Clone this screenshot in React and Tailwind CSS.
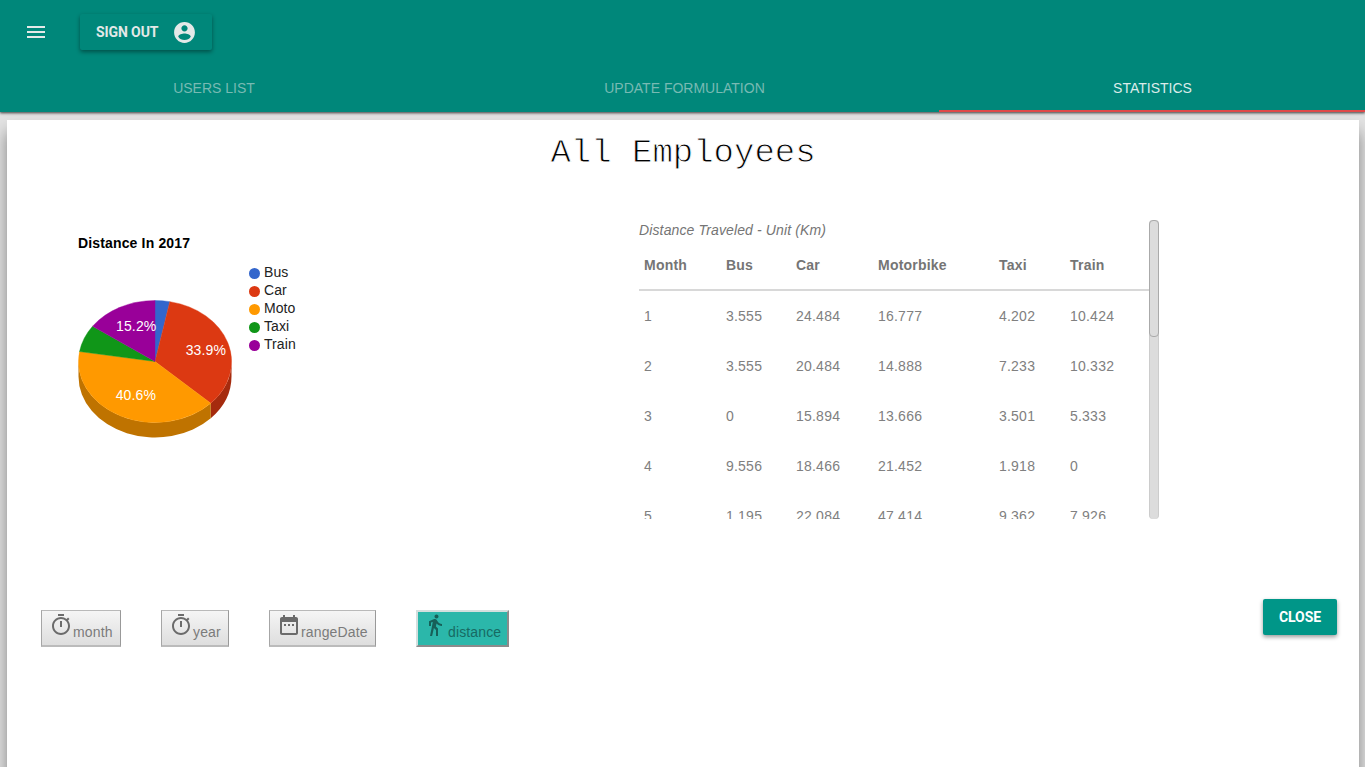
import React from 'react';

const tabs = ['USERS LIST', 'UPDATE FORMULATION', 'STATISTICS'];

const columns = ['Month', 'Bus', 'Car', 'Motorbike', 'Taxi', 'Train'];

const rows = [
  ['1', '3.555', '24.484', '16.777', '4.202', '10.424'],
  ['2', '3.555', '20.484', '14.888', '7.233', '10.332'],
  ['3', '0', '15.894', '13.666', '3.501', '5.333'],
  ['4', '9.556', '18.466', '21.452', '1.918', '0'],
  ['5', '1.195', '22.084', '47.414', '9.362', '7.926'],
];

const slices = [
  { name: 'Bus', value: 3.1, color: '#3366cc' },
  { name: 'Car', value: 33.9, color: '#dc3912' },
  { name: 'Moto', value: 40.6, color: '#ff9900' },
  { name: 'Taxi', value: 7.2, color: '#109618' },
  { name: 'Train', value: 15.2, color: '#990099' },
];

const CX = 77;
const CY = 61.5;
const RX = 76.5;
const RY = 61;
const DEPTH = 15;

function rim(percent) {
  const a = (percent / 100) * 2 * Math.PI;
  return [CX + RX * Math.sin(a), CY - RY * Math.cos(a)];
}

function wall(from, to) {
  const [x1, y1] = rim(from);
  const [x2, y2] = rim(to);
  return `M${x1} ${y1}A${RX} ${RY} 0 0 1 ${x2} ${y2}V${y2 + DEPTH}A${RX} ${RY} 0 0 0 ${x1} ${y1 + DEPTH}Z`;
}

function Pie() {
  let start = 0;
  return (
    <svg width="154" height="140" viewBox="0 0 154 140" className="block shrink-0">
      <path d={wall(25, 37)} fill="#a52b0e" />
      <path d={wall(37, 75)} fill="#bf7300" />
      {slices.map((s) => {
        const [x1, y1] = rim(start);
        start += s.value;
        const [x2, y2] = rim(start);
        return (
          <path
            key={s.name}
            d={`M${CX} ${CY}L${x1} ${y1}A${RX} ${RY} 0 0 1 ${x2} ${y2}Z`}
            fill={s.color}
            stroke={s.color}
            strokeWidth="0.4"
          />
        );
      })}
      <g fill="#fff" fontSize="14" letterSpacing="0.14" fontFamily="Liberation Sans, Arial, sans-serif">
        <text x="38" y="31">15.2%</text>
        <text x="107.7" y="55">33.9%</text>
        <text x="37.7" y="100">40.6%</text>
      </g>
    </svg>
  );
}

function Icon({ d, size, className }) {
  return (
    <svg width={size} height={size} viewBox="0 0 24 24" fill="currentColor" className={className}>
      <path d={d} />
    </svg>
  );
}

const MENU = 'M3 18h18v-2H3v2zm0-5h18v-2H3v2zm0-7v2h18V6H3z';
const ACCOUNT =
  'M12 2C6.48 2 2 6.48 2 12s4.48 10 10 10 10-4.48 10-10S17.52 2 12 2zm0 3c1.66 0 3 1.34 3 3s-1.34 3-3 3-3-1.34-3-3 1.34-3 3-3zm0 14.2c-2.5 0-4.71-1.28-6-3.22.03-1.99 4-3.08 6-3.08 1.99 0 5.97 1.09 6 3.08-1.29 1.94-3.5 3.22-6 3.22z';
const TIMER =
  'M15 1H9v2h6V1zm-4 13h2V8h-2v6zm8.03-6.61l1.42-1.42c-.43-.51-.9-.99-1.41-1.41l-1.42 1.42C16.07 4.74 14.12 4 12 4c-4.97 0-9 4.03-9 9s4.02 9 9 9 9-4.03 9-9c0-2.12-.74-4.07-1.97-5.61zM12 20c-3.87 0-7-3.13-7-7s3.13-7 7-7 7 3.13 7 7-3.13 7-7 7z';
const DATE =
  'M9 11H7v2h2v-2zm4 0h-2v2h2v-2zm4 0h-2v2h2v-2zm2-7h-1V2h-2v2H8V2H6v2H5c-1.11 0-1.99.9-1.99 2L3 20c0 1.1.89 2 2 2h14c1.1 0 2-.9 2-2V6c0-1.1-.9-2-2-2zm0 16H5V9h14v11z';
const WALK =
  'M13.5 5.5c1.1 0 2-.9 2-2s-.9-2-2-2-2 .9-2 2 .9 2 2 2zM9.8 8.9L7 23h2.1l1.8-8 2.1 2v6h2v-7.5l-2.1-2 .6-3C14.8 12 16.8 13 19 13v-2c-1.9 0-3.5-1-4.3-2.4l-1-1.6c-.4-.6-1-1-1.7-1-.3 0-.5.1-.8.1L6 8.3V13h2V9.6l1.8-.7';

const filters = [
  { label: 'month', icon: TIMER, width: 'w-[80px]' },
  { label: 'year', icon: TIMER, width: 'w-[68px]' },
  { label: 'rangeDate', icon: DATE, width: 'w-[107px]' },
  { label: 'distance', icon: WALK, width: 'w-[93px]', active: true },
];

function FilterButton({ label, icon, width, active }) {
  const look = active
    ? 'border-2 pl-[5px] border-t-[#d4dfde] border-l-[#d4dfde] border-r-[#8b8b8b] border-b-[#8b8b8b] bg-[#2bb7aa] text-[#176a63]'
    : 'border pl-[7px] pt-px border-t-[#b9b9b9] border-l-[#a6a6a6] border-r-[#999] border-b-2 border-b-[#bbb] bg-linear-to-b from-[#f5f5f5] to-[#dedede] text-[#7b7b7b]';
  return (
    <button className={`flex h-[37px] items-start whitespace-nowrap ${width} ${look}`}>
      <Icon
        d={icon}
        size={24}
        className={active ? 'mt-px mr-px shrink-0 text-[#176058]' : 'mt-px shrink-0 text-[#6b6b6b]'}
      />
      <span className="mt-[10px] text-[14px] leading-5 tracking-[0.14px]">{label}</span>
    </button>
  );
}

export default function App() {
  return (
    <div className="flex h-[767px] w-[1365px] flex-col overflow-hidden bg-[#e2e2e2] font-['Liberation_Sans',Arial,sans-serif]">
      <header className="relative z-10 flex h-28 shrink-0 flex-col bg-[#00877a] shadow-[0_1px_3px_rgba(0,0,0,0.5),0_1px_2px_rgba(0,0,0,0.35)]">
        <div className="flex h-16 items-center pl-6 text-[#e4e9e8]">
          <Icon d={MENU} size={24} />
          <button className="ml-8 flex h-9 w-[132px] items-center rounded-[2px] pl-4 shadow-[0_2px_4px_rgba(0,0,0,0.4)]">
            <span className="w-[76px] text-left font-[Roboto,sans-serif] text-[14px] leading-[35px] font-bold tracking-[-0.1px]">
              SIGN OUT
            </span>
            <Icon d={ACCOUNT} size={25} className="shrink-0" />
          </button>
        </div>
        <nav className="grid h-12 grid-cols-[428px_513px_424px]">
          {tabs.map((tab, i) => (
            <div
              key={tab}
              className={
                i === 2
                  ? '-ml-0.5 h-12 border-b-2 border-[#e04848] pl-px text-center text-[14px] leading-12 text-[#dcecea]'
                  : 'h-12 text-center text-[14px] leading-12 text-[#78bab3]'
              }
            >
              {tab}
            </div>
          ))}
        </nav>
      </header>

      <main className="mx-[7px] mt-2 mr-[6px] flex h-[700px] shrink-0 flex-col bg-white shadow-[0_12px_15px_rgba(0,0,0,0.42)]">
        <h1 className="h-[100px] pt-[13px] text-center font-['Liberation_Mono','Courier_New',monospace] text-[34px] leading-10 font-normal text-black [-webkit-text-stroke:0.9px_white]">
          All Employees
        </h1>

        <div className="flex h-[300px]">
          <section className="w-[632px] pt-[15px] pl-[71px]">
            <h2 className="text-[14px] leading-4 font-bold tracking-[0.15px] text-black">Distance In 2017</h2>
            <div className="flex">
              <div className="pt-[49px]">
                <Pie />
              </div>
              <ul className="ml-[17px] pt-[12px] text-[14px] tracking-[0.08px] text-[#222]">
                {slices.map((s) => (
                  <li key={s.name} className="flex h-[18px] items-center gap-1 leading-[18px]">
                    <span className="mt-[2px] size-[11px] rounded-full" style={{ background: s.color }} />
                    {s.name}
                  </li>
                ))}
              </ul>
            </div>
          </section>

          <section className="flex h-[299px] w-[520px] overflow-hidden">
            <div className="h-[299px] w-[510px] overflow-hidden text-[14px] tracking-[0.22px] text-[#757575]">
              <p className="h-5 leading-5 tracking-[0.13px] italic">Distance Traveled - Unit (Km)</p>
              <table className="w-[510px] table-fixed border-separate border-spacing-0">
                <colgroup>
                  <col className="w-[82px]" />
                  <col className="w-[70px]" />
                  <col className="w-[82px]" />
                  <col className="w-[121px]" />
                  <col className="w-[71px]" />
                  <col className="w-[84px]" />
                </colgroup>
                <thead>
                  <tr className="h-[51px]">
                    {columns.map((c) => (
                      <th key={c} className="border-b-2 border-[#d8d8d8] p-0 pl-[5px] text-left leading-5 font-bold">
                        {c}
                      </th>
                    ))}
                  </tr>
                </thead>
                <tbody>
                  {rows.map((r) => (
                    <tr key={r[0]} className="h-[50px]">
                      {r.map((v, i) => (
                        <td key={i} className="p-0 pl-[5px] leading-5 text-[#808080]">
                          {v}
                        </td>
                      ))}
                    </tr>
                  ))}
                </tbody>
              </table>
            </div>
            <div className="h-[299px] w-[10px] rounded-[4px] border-x border-[#ccc] bg-[#dcdcdc]">
              <div className="-mx-px h-[117px] rounded-[4px] border border-[#aaa] bg-[#dcdcdc]" />
            </div>
          </section>
        </div>

        <div className="flex pt-[80px] pl-[34px]">
          <div className="flex gap-10 pt-[10px]">
            {filters.map((f) => (
              <FilterButton key={f.label} {...f} />
            ))}
          </div>
          <button className="-mt-px mr-[22px] ml-auto h-9 w-[74px] rounded-[2px] bg-[#009688] font-[Roboto,sans-serif] text-[14px] leading-9 font-bold tracking-[-0.1px] text-white shadow-[0_2px_4px_rgba(0,0,0,0.4)]">
            CLOSE
          </button>
        </div>
      </main>
    </div>
  );
}
